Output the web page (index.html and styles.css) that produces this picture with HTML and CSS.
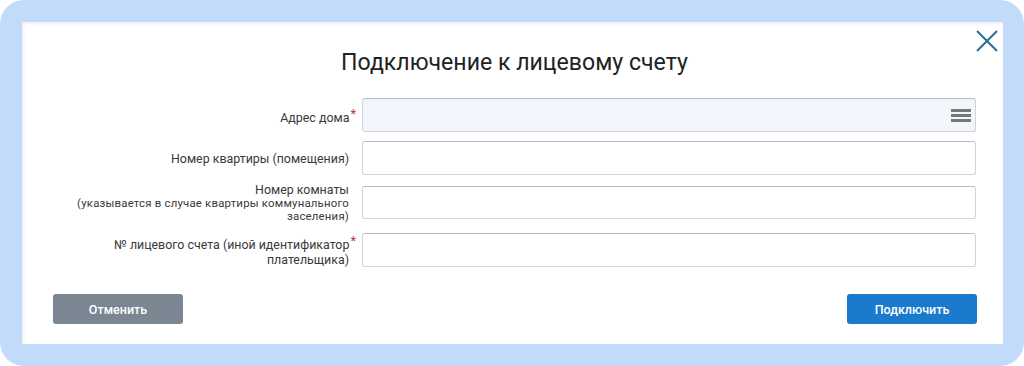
FILE: index.html
```html
<!DOCTYPE html>
<html lang="ru">
<head>
    <meta charset="UTF-8">
    <title>Подключение к лицевому счету</title>
    <link rel="stylesheet" href="styles.css">
</head>
<body>
    <!-- рамка вокруг окна -->
    <div class="frame">
        <div class="dialog">
            <button class="close-btn" title="Закрыть">
                <svg width="22" height="22" viewBox="0 0 22 22">
                    <path d="M1 1 L21 21 M21 1 L1 21" stroke="#2a6f93" stroke-width="2" fill="none"/>
                </svg>
            </button>

            <h1 class="dialog-title">Подключение к лицевому счету</h1>

            <!-- ФОРМА -->
            <form class="form">
                <div class="form-row row-address">
                    <label class="form-label">Адрес дома<span class="req">*</span></label>
                    <div class="input input-select">
                        <span class="menu-icon"></span>
                    </div>
                </div>

                <div class="form-row row-flat">
                    <label class="form-label">Номер квартиры (помещения)</label>
                    <div class="input"></div>
                </div>

                <div class="form-row row-room">
                    <label class="form-label">Номер комнаты
                        <small>(указывается в случае квартиры коммунального заселения)</small>
                    </label>
                    <div class="input"></div>
                </div>

                <div class="form-row row-account">
                    <label class="form-label">№ лицевого счета (иной идентификатор<span class="req">*</span> плательщика)</label>
                    <div class="input"></div>
                </div>
            </form>

            <!-- КНОПКИ -->
            <div class="actions">
                <button class="btn btn-cancel">Отменить</button>
                <button class="btn btn-primary">Подключить</button>
            </div>
        </div>
    </div>
</body>
</html>
```

FILE: styles.css
```css
* {
    margin: 0;
    padding: 0;
    box-sizing: border-box;
    font-family: Roboto, "Liberation Sans", sans-serif;
}

body {
    background: #ffffff;
    width: 1024px;
    height: 366px;
    overflow: hidden;
}

/* голубая рамка */
.frame {
    width: 1024px;
    height: 366px;
    background: #c3dbfb;
    border-radius: 24px;
    padding: 22px 21px 22px 22px;
}

.dialog {
    position: relative;
    background: #ffffff;
    height: 100%;
    padding: 26px 27px 0 31px;
    box-shadow: inset 2px 2px 3px rgba(0, 0, 0, 0.06);
}

.close-btn {
    position: absolute;
    top: 8px;
    right: 5px;
    width: 22px;
    height: 22px;
    border: none;
    background: none;
    cursor: pointer;
}

.close-btn svg {
    display: block;
}

.dialog-title {
    text-align: center;
    font-size: 23.1px;
    font-weight: 400;
    line-height: 30px;
    color: #222;
    margin-bottom: 20px;
}

/* строки формы */
.form-row {
    display: grid;
    grid-template-columns: 296px 1fr;
    column-gap: 13px;
    align-items: center;
}

.row-flat {
    margin-top: 9px;
}

.row-room {
    margin-top: 7px;
}

.row-account {
    margin-top: 10px;
}

.form-label {
    text-align: right;
    font-size: 12.4px;
    line-height: 15px;
    color: #3a3a3a;
}

.form-label small {
    display: block;
    font-size: 11.4px;
    line-height: 13px;
    letter-spacing: 0.2px;
}

.req {
    color: #c0392b;
    font-size: 13px;
    vertical-align: 4px;
    margin-left: 1px;
    margin-right: -7px;
}

.input {
    height: 34px;
    border: 1px solid #d0d3d8;
    border-top-color: #b9bcc1;
    border-radius: 3px;
    background: #fff;
}

.row-room .input {
    height: 33px;
}

.input-select {
    background: #f2f5fb;
    display: flex;
    align-items: center;
    justify-content: flex-end;
    padding-right: 4px;
}

/* значок меню */
.menu-icon {
    width: 20px;
    height: 13px;
    border-top: 3px solid #777;
    border-bottom: 3px solid #777;
    position: relative;
}

.menu-icon::after {
    content: "";
    position: absolute;
    left: 0;
    right: 0;
    top: 2px;
    border-top: 3px solid #777;
}

/* кнопки */
.actions {
    display: flex;
    justify-content: space-between;
    margin-top: 27px;
    margin-right: -1px;
}

.btn {
    width: 130px;
    height: 30px;
    border: none;
    border-radius: 3px;
    color: #fff;
    font-size: 12.5px;
    font-weight: 500;
    cursor: pointer;
}

.btn-cancel {
    background: #7a8792;
}

.btn-primary {
    background: #1a7bcd;
}
```
